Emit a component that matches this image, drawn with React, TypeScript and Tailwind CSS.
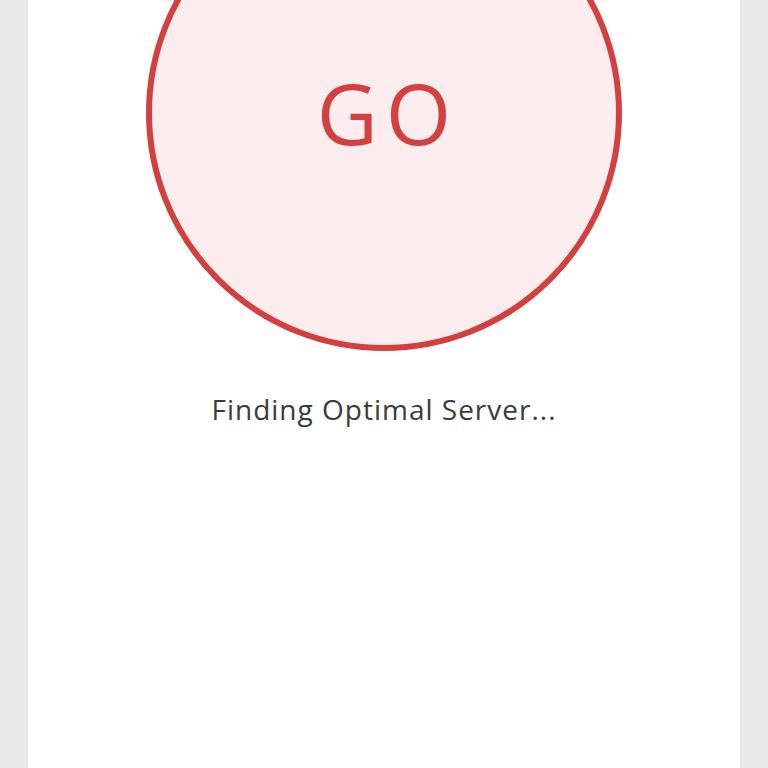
export default function App() {
    return (
        <div className="h-[768px] overflow-hidden bg-[#e9e9e9] flex justify-center">
            <div className="w-[712px] h-full bg-white flex flex-col items-center shadow-[0_0_3px_rgba(0,0,0,0.08)]">
                <div className="mt-[-125px] w-[476px] h-[476px] shrink-0 rounded-full border-[6px] border-solid border-[#d3403f] bg-[#fbeced] flex items-center justify-center">
                    <span className="pl-[8px] font-['Open_Sans',sans-serif] font-normal text-[#d3403f] text-[84px] leading-none tracking-[8px]">
                        GO
                    </span>
                </div>
                <p className="mt-[40px] font-['Open_Sans',sans-serif] font-normal text-[28px] leading-[36px] text-[#3b3b3b] tracking-[1px]">
                    Finding Optimal Server...
                </p>
            </div>
        </div>
    );
}
